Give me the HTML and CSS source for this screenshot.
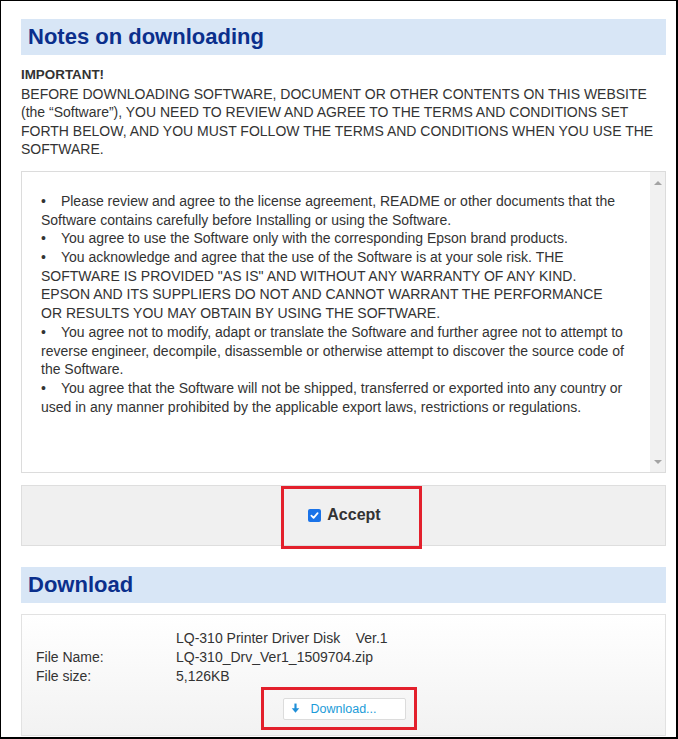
FILE: index.html
```html
<!DOCTYPE html>
<html>
<head>
<meta charset="utf-8">
<link rel="stylesheet" href="styles.css">
</head>
<body>
<div class="frame">
  <div class="page">
    <h2 class="band">Notes on downloading</h2>
    <div class="notice">
      <div class="imp">IMPORTANT!</div>
      BEFORE DOWNLOADING SOFTWARE, DOCUMENT OR OTHER CONTENTS ON THIS WEBSITE (the “Software”), YOU NEED TO REVIEW AND AGREE TO THE TERMS AND CONDITIONS SET FORTH BELOW, AND YOU MUST FOLLOW THE TERMS AND CONDITIONS WHEN YOU USE THE SOFTWARE.
    </div>
    <div class="terms">
      <div class="terms-text">
        <p>Please review and agree to the license agreement, README or other documents that the Software contains carefully before Installing or using the Software.</p>
        <p>You agree to use the Software only with the corresponding Epson brand products.</p>
        <p>You acknowledge and agree that the use of the Software is at your sole risk. THE SOFTWARE IS PROVIDED "AS IS" AND WITHOUT ANY WARRANTY OF ANY KIND. EPSON AND ITS SUPPLIERS DO NOT AND CANNOT WARRANT THE PERFORMANCE OR RESULTS YOU MAY OBTAIN BY USING THE SOFTWARE.</p>
        <p>You agree not to modify, adapt or translate the Software and further agree not to attempt to reverse engineer, decompile, disassemble or otherwise attempt to discover the source code of the Software.</p>
        <p>You agree that the Software will not be shipped, transferred or exported into any country or used in any manner prohibited by the applicable export laws, restrictions or regulations.</p>
      </div>
      <div class="sbar">
        <span class="arr up"></span>
        <span class="arr down"></span>
      </div>
    </div>
    <div class="accept">
      <label class="acc-label"><span class="cb"><svg viewBox="0 0 12 12" width="12" height="12"><path d="M2.6 6.2 L5 8.6 L9.4 3.4" fill="none" stroke="#fff" stroke-width="1.9" stroke-linecap="round" stroke-linejoin="round"/></svg></span>Accept</label>
      <div class="mark mark-accept"></div>
    </div>
    <h2 class="band band2">Download</h2>
    <div class="dlbox">
      <div class="rows">
        <div class="row"><span class="lab"></span><span class="val">LQ-310 Printer Driver Disk&nbsp;&nbsp;&nbsp;&nbsp;Ver.1</span></div>
        <div class="row"><span class="lab">File Name:</span><span class="val">LQ-310_Drv_Ver1_1509704.zip</span></div>
        <div class="row"><span class="lab">File size:</span><span class="val">5,126KB</span></div>
      </div>
      <div class="btnwrap">
        <button class="dlbtn"><svg viewBox="0 0 10 12" width="9" height="11"><path d="M5 0.5 V7" stroke="#1f8fd8" stroke-width="2.4" fill="none"/><path d="M0.8 5.6 L5 10.6 L9.2 5.6 Z" fill="#1f8fd8"/></svg><span>Download...</span></button>
        <div class="mark mark-dl"></div>
      </div>
    </div>
  </div>
</div>
</body>
</html>
```
FILE: styles.css
```css
html, body {
  margin: 0;
  padding: 0;
  background: #fff;
}
body {
  font-family: "Liberation Sans", Arial, sans-serif;
  color: #333;
}
.frame {
  box-sizing: border-box;
  width: 678px;
  height: 739px;
  border-style: solid;
  border-color: #000;
  border-width: 1px 2px 2px 1px;
  overflow: hidden;
}
.page {
  padding: 18px 10px 0 20px;
}
.band {
  margin: 0;
  height: 36px;
  line-height: 36px;
  background: #d8e6f6;
  color: #0b2f8c;
  font-size: 22px;
  font-weight: bold;
  padding-left: 7px;
}
.notice {
  margin-top: 11px;
  font-size: 14px;
  line-height: 18.6px;
  color: #333;
}
.imp {
  font-weight: bold;
  font-size: 13.4px;
}
.terms {
  margin-top: 12px;
  height: 302px;
  box-sizing: border-box;
  border: 1px solid #dcdcdc;
  display: flex;
  background: #fff;
}
.terms-text {
  flex: 1;
  padding: 20px 23px 0 19px;
  font-size: 14px;
  line-height: 18.7px;
  color: #333;
}
.terms-text p {
  margin: 0;
}
.terms-text p::before {
  content: "•";
  margin-right: 15px;
}
.sbar {
  width: 15px;
  background: #f1f1f1;
  display: flex;
  flex-direction: column;
  justify-content: space-between;
  align-items: center;
  padding: 9px 0 8px;
}
.arr {
  width: 0;
  height: 0;
  border-left: 4px solid transparent;
  border-right: 4px solid transparent;
}
.arr.up {
  border-bottom: 4px solid #a3a3a3;
}
.arr.down {
  border-top: 4px solid #a3a3a3;
}
.accept {
  position: relative;
  margin-top: 12px;
  height: 61px;
  box-sizing: border-box;
  border: 1px solid #dedede;
  background: #f0f0f0;
  display: flex;
  align-items: center;
  justify-content: center;
}
.acc-label {
  display: flex;
  align-items: center;
  font-size: 16px;
  font-weight: bold;
  color: #333;
  padding-left: 2px;
}
.cb {
  width: 13px;
  height: 13px;
  border-radius: 2px;
  background: #1a73e8;
  display: inline-flex;
  align-items: center;
  justify-content: center;
  margin-right: 6px;
}
.cb svg {
  width: 11px;
  height: 11px;
}
.mark {
  position: absolute;
  box-sizing: border-box;
  border: 3px solid #e3202c;
}
.mark-accept {
  left: 259px;
  top: 0px;
  width: 141px;
  height: 63px;
}
.band2 {
  margin-top: 21px;
}
.dlbox {
  margin-top: 11px;
  height: 122px;
  box-sizing: border-box;
  border: 1px solid #e2e2e2;
  background: linear-gradient(#ffffff, #f2f2f2);
  padding-top: 14px;
}
.rows {
  font-size: 14px;
  line-height: 19px;
  color: #333;
}
.row {
  display: flex;
}
.lab {
  width: 140px;
  padding-left: 14px;
}
.btnwrap {
  position: relative;
  display: flex;
  justify-content: center;
  margin-top: 12px;
  margin-left: 1px;
}
.dlbtn {
  width: 123px;
  height: 22px;
  box-sizing: border-box;
  border: 1px solid #dcdcdc;
  border-radius: 2px;
  background: #fff;
  display: flex;
  align-items: center;
  justify-content: flex-start;
  padding: 0 0 0 7px;
  font-family: "Liberation Sans", Arial, sans-serif;
  font-size: 12.5px;
  color: #1b9bd8;
  gap: 11px;
}
.mark-dl {
  left: 238px;
  top: -11px;
  width: 156px;
  height: 43px;
}
```
